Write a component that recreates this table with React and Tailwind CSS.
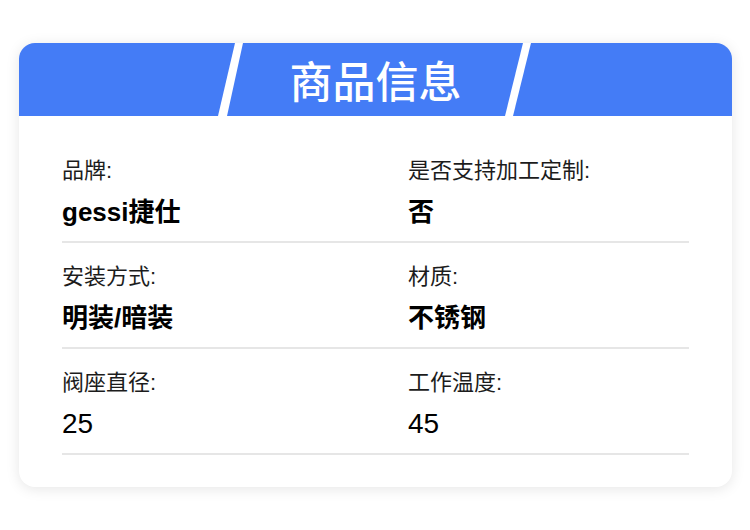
import React from 'react';

const rows = [
  [
    { label: '品牌:', value: 'gessi捷仕', bold: true },
    { label: '是否支持加工定制:', value: '否', bold: true },
  ],
  [
    { label: '安装方式:', value: '明装/暗装', bold: true },
    { label: '材质:', value: '不锈钢', bold: true },
  ],
  [
    { label: '阀座直径:', value: '25', bold: false },
    { label: '工作温度:', value: '45', bold: false },
  ],
];

const Field = ({ label, value, bold }) => (
  <div className="flex flex-col">
    <div className="text-[22px] leading-[28px] text-[#1c1c1c]">{label}</div>
    {bold ? (
      <div className="mt-[10px] text-[26px] leading-[34px] font-bold text-black">{value}</div>
    ) : (
      <div className="mt-[10px] text-[28px] leading-[34px] font-normal text-black">{value}</div>
    )}
  </div>
);

const App = () => {
  return (
    <div
      className="w-[750px] h-[530px] bg-white pt-[43px] pl-[19px]"
      style={{ fontFamily: '"Liberation Sans", "Noto Sans CJK SC", sans-serif' }}
    >
      <div className="w-[713px] h-[444px] rounded-[16px] bg-white shadow-[0_2px_14px_rgba(0,0,0,0.10)] overflow-hidden flex flex-col">
        {/* 标题栏 */}
        <div className="relative h-[73px] bg-[#447cf6] flex items-center justify-center shrink-0">
          <svg className="absolute inset-0" width="713" height="73" viewBox="0 0 713 73">
            <polygon points="216,0 224,0 208,73 199,73" fill="#ffffff" />
            <polygon points="504,0 512,0 494,73 486,73" fill="#ffffff" />
          </svg>
          <h2
            className="relative text-white text-[43px] leading-none font-medium"
            style={{ fontFamily: '"Noto Sans CJK SC", sans-serif' }}
          >
            商品信息
          </h2>
        </div>

        {/* 参数列表 */}
        <div className="px-[43px] pt-[21px]">
          {rows.map((row, i) => (
            <div
              key={i}
              className="grid grid-cols-[346px_1fr] pt-5 pb-[12px] border-b-2 border-[#e6e6e6]"
            >
              {row.map((f) => (
                <Field key={f.label} {...f} />
              ))}
            </div>
          ))}
        </div>
      </div>
    </div>
  );
};

export default App;
